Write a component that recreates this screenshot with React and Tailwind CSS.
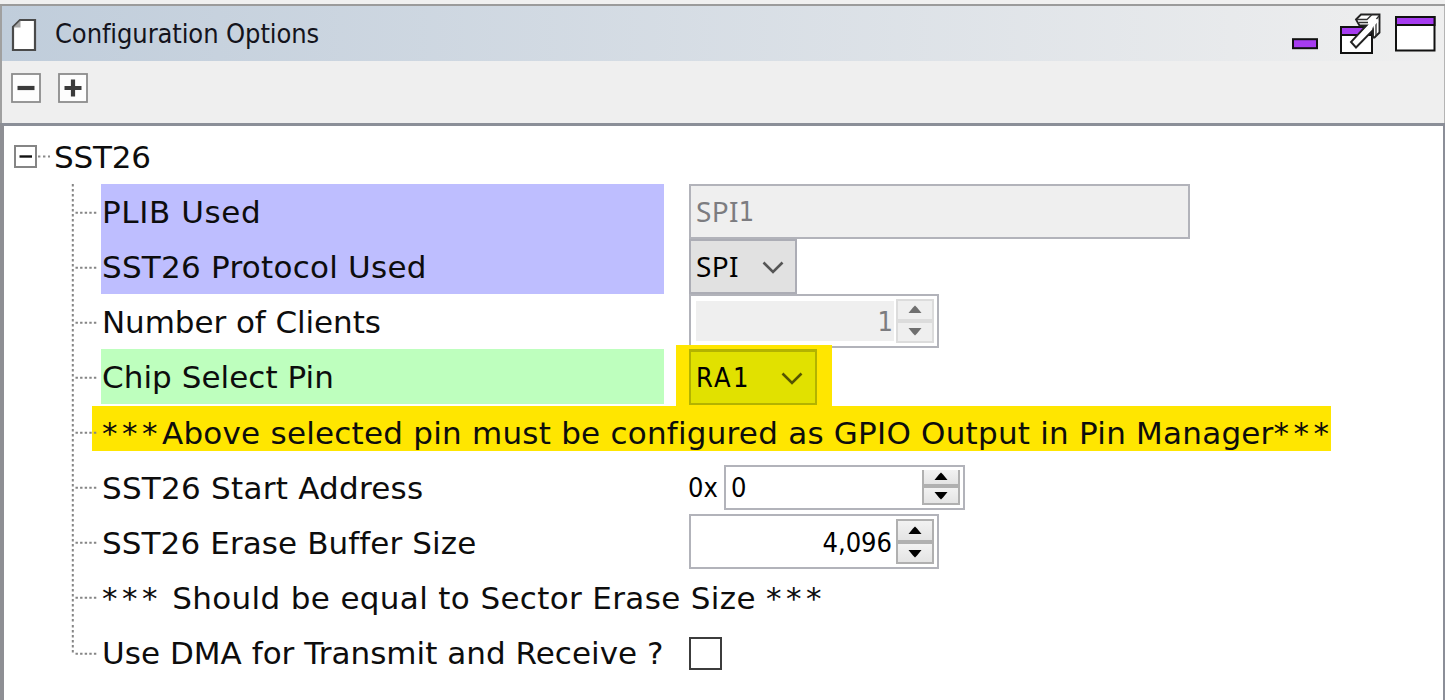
const label = "font-['DejaVu_Sans',sans-serif] text-[31px] leading-none whitespace-pre text-[#0d0d0d]";
const control = "font-['DejaVu_Sans_Condensed','DejaVu_Sans',sans-serif] font-stretch-condensed text-[27px] leading-none whitespace-pre";

function Stars() {
  return <span className="tracking-[4.5px]">***</span>;
}

function PageIcon() {
  return (
    <svg width="26" height="34" viewBox="0 0 26 34" className="shrink-0">
      <path d="M9 2H24V32H2V9Z" fill="#fff" stroke="#4a4a4a" strokeWidth="2.2" />
      <path d="M9.5 2.5V9.5H2.5Z" fill="#a8a8a8" />
    </svg>
  );
}

function ToolButton({ plus }) {
  return (
    <svg width="30" height="30" viewBox="0 0 30 30" className="shrink-0">
      <rect x="1" y="1" width="28" height="28" fill="#fdfdfd" stroke="#8c8c8c" strokeWidth="1.8" />
      <path d={plus ? "M6.5 15H23.5M15 6.5V23.5" : "M6.5 15H23.5"} stroke="#3a3a3a" strokeWidth="4.2" />
    </svg>
  );
}

function WindowButtons() {
  return (
    <svg width="150" height="50" viewBox="0 0 150 50" className="shrink-0">
      <g stroke="#111" strokeWidth="2">
        <rect x="3" y="33" width="24" height="9" fill="#a63cf0" transform="translate(0 .2)" />
        <rect x="51" y="21" width="31" height="26" fill="#fff" />
        <rect x="51" y="21" width="31" height="8" fill="#a63cf0" />
        <rect x="106" y="11" width="38.5" height="33.5" fill="#fff" />
        <rect x="106" y="11" width="38.5" height="8" fill="#a63cf0" />
      </g>
      <path
        d="M66 13.5L71 8.5H89.5V26.5L84.5 31.5H83V24L66 41.5L61 36L76.5 19.5H69.5Z"
        fill="#fff"
        stroke="#222"
        strokeWidth="1.9"
      />
      <path d="M67 13.5H77L82 8.5M69 16.5H78M83 24V17L89 10M86 14V30" fill="none" stroke="#333" strokeWidth="1.3" />
      <path d="M65 37L87 13.5" stroke="#fff" strokeWidth="4.5" />
    </svg>
  );
}

function Connector({ last }) {
  return (
    <svg width="30" height="55" viewBox="0 0 30 55" className="shrink-0 overflow-visible">
      <path d={last ? "M1.8 0V28" : "M1.8 0V55"} stroke="#858585" strokeWidth="2" strokeDasharray="2.4 2.6" />
      <path d="M4.5 28.7H27" stroke="#858585" strokeWidth="1.9" strokeDasharray="2.4 2.2" />
    </svg>
  );
}

function Row({ children, bg = "", text, track = "", last }) {
  return (
    <div className="flex h-[55.15px] pl-[71px]">
      <div className="relative z-10"><Connector last={last} /></div>
      <div className={`flex items-center w-[563px] mr-[25px] shrink-0 pl-px ${bg}`}>
        <span className={`${label} ${track} relative z-10 pt-[3px]`}>{text}</span>
      </div>
      {children}
    </div>
  );
}

function Chevron({ color }) {
  return (
    <svg width="22" height="14" viewBox="0 0 22 14" className="mt-[3px]">
      <path d="M1.5 1.5L11 11L20.5 1.5" fill="none" stroke={color} strokeWidth="2.6" />
    </svg>
  );
}

function StepButton({ down, off, clipped }) {
  return (
    <div
      className={`flex flex-1 items-center justify-center border-2 ${
        off ? "border-[#dcdcdc] bg-[#efefef]" : "border-[#b0b0b0] bg-gradient-to-b from-[#f2f2f2] to-[#e4e4e4]"
      } ${clipped ? "border-t-0" : ""}`}
    >
      <svg width="14" height="9" viewBox="0 0 14 9">
        <path d={down ? "M.5 1H13.5L9 6.5L7 8.5L5 6.5Z" : "M.5 8H13.5L9 2.5L7 .5L5 2.5Z"} fill={off ? "#6f6f6f" : "#000"} />
      </svg>
    </div>
  );
}

function Steps({ off, clipped }) {
  return (
    <div className="flex flex-col w-[38px] shrink-0">
      <StepButton off={off} clipped={clipped} />
      <StepButton off={off} down />
    </div>
  );
}

export default function App() {
  return (
    <div className="flex flex-col w-[1445px] h-[700px] overflow-hidden bg-[#efefef] antialiased">
      <div className="h-1 bg-[#f0f0f0]" />
      <div className="h-0.5 bg-[#9b9b9b]" />
      <header className="flex items-start h-[55px] border-l-2 border-r border-l-[#a0a0a0] border-r-[#b4b4b4] bg-gradient-to-r from-[#c0cddb] to-[#efefef] pl-[9px]">
        <div className="pt-3"><PageIcon /></div>
        <h1 className={`${control} text-[#14141c] ml-[18px] mt-[14px] tracking-[-0.1px]`}>Configuration Options</h1>
        <div className="ml-auto mr-1"><WindowButtons /></div>
      </header>
      <div className="flex gap-[17px] h-[62px] pt-[12px] pl-[9px] border-l-2 border-r border-l-[#a0a0a0] border-r-[#b4b4b4] bg-[#efefef]">
        <ToolButton />
        <ToolButton plus />
      </div>
      <main className="flex-1 border-l-4 border-r-2 border-t-[3px] border-t-[#8b8f98] border-l-[#8e8f94] border-r-[#8b8e98] bg-white">
        <div className="-ml-1 pt-[2.5px]">
          <div className="flex items-center h-[55px] pl-[14px]">
            <svg width="40" height="24" viewBox="0 0 40 24" className="mt-[2px]">
              <rect x="1" y="1" width="21" height="21" fill="#fff" stroke="#858585" strokeWidth="2" />
              <path d="M5.5 11.5H18" stroke="#111" strokeWidth="2.4" />
              <path d="M24 11.5H36" stroke="#8a8a8a" strokeWidth="1.9" strokeDasharray="2.4 2.6" />
            </svg>
            <span className={`${label} tracking-[-0.2px] pt-[3px]`}>SST26</span>
          </div>

          <Row text="PLIB Used" track="tracking-[0.6px]" bg="bg-[#bebeff]">
            <div className={`${control} flex items-center w-[501px] h-[55px] border-2 border-[#b2b3ba] bg-[#efefef] pl-[5px] text-[#7c7c80]`}>
              <span className="font-['Noto_Sans',sans-serif] text-[28px] tracking-[0.3px] -mt-px">SPI</span>1
            </div>
          </Row>

          <Row text="SST26 Protocol Used" track="tracking-[0.25px]" bg="bg-[#bebeff]">
            <div className={`${control} flex items-center justify-between w-[108px] h-[55px] border-2 border-[#acadb5] bg-[#e1e1e1] pl-[5px] pr-[11px] text-black`}>
              <span className="font-['Noto_Sans',sans-serif] text-[28px] tracking-[0.3px] -mt-px">SPI</span>
              <Chevron color="#555" />
            </div>
          </Row>

          <Row text="Number of Clients" track="tracking-[-0.07px]">
            <div className="flex w-[250px] h-[54px] border-2 border-[#b2b3ba] bg-white p-[3px]">
              <div className={`${control} flex flex-1 items-center justify-end ml-0.5 my-0.5 pr-px pt-0.5 bg-[#efefef] text-[#7c7c80] mr-[2px]`}>1</div>
              <Steps off />
            </div>
          </Row>

          <Row text="Chip Select Pin" track="tracking-[0.05px]" bg="bg-[#beffbe]">
            <div className="relative">
              <div className="absolute left-[-13px] top-[-4px] w-[156px] h-[62px] bg-[#ffe600]" />
              <div className={`${control} relative flex items-center justify-between w-[128px] h-[56px] border-2 border-t-[3px] border-[#b3b300] bg-[#e1e100] pl-[5px] pr-[12px] text-black`}>
                <span className="tracking-[2.3px]">RA1</span>
                <Chevron color="#555500" />
              </div>
            </div>
          </Row>

          <div className="relative">
            <div className="absolute left-[92px] top-[2px] w-[1239px] h-[45px] bg-[#ffe600]" />
            <Row
              track="tracking-[0.23px]"
              text={<><Stars />Above selected pin must be configured as GPIO Output in Pin Manager<Stars /></>}
            />
          </div>

          <Row text="SST26 Start Address" track="tracking-[0.25px]">
            <div className="flex items-center h-[55px] -ml-px">
              <span className={`${control} w-[36px] text-black pt-px`}>0x</span>
              <div className="flex w-[241px] h-[45px] mt-px border-2 border-[#b2b3ba] bg-white p-[3px]">
                <div className={`${control} flex flex-1 items-center pl-0.5 text-black`}>0</div>
                <Steps clipped />
              </div>
            </div>
          </Row>

          <Row text="SST26 Erase Buffer Size" track="tracking-[0.1px]">
            <div className="flex w-[250px] h-[55px] border-2 border-[#b2b3ba] bg-white p-[3px]">
              <div className={`${control} flex flex-1 items-center justify-end pr-[4px] pt-px text-black`}>4,096</div>
              <Steps />
            </div>
          </Row>

          <Row track="tracking-[0.35px]" text={<><Stars /> Should be equal to Sector Erase Size <Stars /></>} />

          <Row text="Use DMA for Transmit and Receive ?" track="tracking-[0.03px]" last>
            <div className="self-center w-[33px] h-[33px] mt-[2px] border-2 border-[#3c3c3c] bg-white" />
          </Row>
        </div>
      </main>
    </div>
  );
}
